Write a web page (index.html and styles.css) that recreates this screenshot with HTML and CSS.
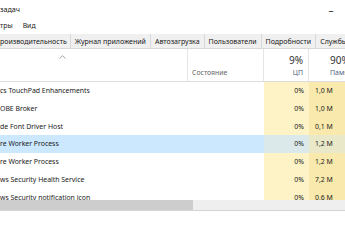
FILE: index.html
```html
<!DOCTYPE html>
<html lang="ru">

<head>
	<meta charset="UTF-8">
	<title>Диспетчер задач</title>
	<link rel="stylesheet" href="styles.css">
</head>

<body>
	<section class="window">
		<header class="titlebar">
			<span class="title">задач</span>
			<span class="win-btn">&#8211;</span>
		</header>
		<nav class="menubar">
			<span>тры</span>
			<span>Вид</span>
		</nav>
		<nav class="tabs">
			<span class="tab">роизводительность</span>
			<span class="tab">Журнал приложений</span>
			<span class="tab">Автозагрузка</span>
			<span class="tab">Пользователи</span>
			<span class="tab">Подробности</span>
			<span class="tab">Службы</span>
		</nav>

		<main class="table">
			<div class="head">
				<div class="col name">
					<svg class="sort" width="7" height="4" viewBox="0 0 7 4"><path d="M0.5 3.5 L3.5 0.8 L6.5 3.5" fill="none" stroke="#8a8a8a" stroke-width="0.8"/></svg>
				</div>
				<div class="col status"><span class="sub">Состояние</span></div>
				<div class="col cpu"><span class="big">9%</span><span class="sub">ЦП</span></div>
				<div class="col mem"><span class="big">90%</span><span class="sub">Памя</span></div>
			</div>

			<div class="rows">
				<div class="row">
					<div class="col name">cs TouchPad Enhancements</div>
					<div class="col status"></div>
					<div class="col cpu">0%</div>
					<div class="col mem">1,0 M</div>
				</div>
				<div class="row">
					<div class="col name">OBE Broker</div>
					<div class="col status"></div>
					<div class="col cpu">0%</div>
					<div class="col mem">1,0 M</div>
				</div>
				<div class="row">
					<div class="col name">de Font Driver Host</div>
					<div class="col status"></div>
					<div class="col cpu">0%</div>
					<div class="col mem">0,1 M</div>
				</div>
				<div class="row selected">
					<div class="col name">re Worker Process</div>
					<div class="col status"></div>
					<div class="col cpu">0%</div>
					<div class="col mem">1,2 M</div>
				</div>
				<div class="row">
					<div class="col name">re Worker Process</div>
					<div class="col status"></div>
					<div class="col cpu">0%</div>
					<div class="col mem">1,2 M</div>
				</div>
				<div class="row">
					<div class="col name">ws Security Health Service</div>
					<div class="col status"></div>
					<div class="col cpu">0%</div>
					<div class="col mem">7,2 M</div>
				</div>
				<div class="row">
					<div class="col name">ws Security notification icon</div>
					<div class="col status"></div>
					<div class="col cpu">0%</div>
					<div class="col mem">0,6 M</div>
				</div>
			</div>

			<div class="hscroll">
				<div class="thumb"></div>
			</div>
		</main>
	</section>
</body>

</html>
```

FILE: styles.css
```css
body {
	margin: 0;
	padding: 0;
	background-color: white;
	overflow: hidden;
}

.window {
	width: 345px;
	height: 240px;
	overflow: hidden;
	font-family: "Noto Sans", "Liberation Sans", sans-serif;
	font-size: 6.9px;
	color: #1a1a1a;
}

/* title + menu */
.titlebar {
	height: 17px;
	display: flex;
	align-items: center;
	justify-content: space-between;
	font-size: 7.2px;
}

.win-btn {
	width: 20px;
	margin-right: 4px;
	padding-top: 3px;
	text-align: center;
	font-size: 10px;
	color: #333;
}

.menubar {
	height: 17px;
	display: flex;
	align-items: center;
	gap: 10px;
}

/* tabs */
.tabs {
	height: 14px;
	display: flex;
	background-color: #f0f0f0;
	border-bottom: 1px solid #d9d9d9;
	font-size: 7px;
}

.tab {
	display: flex;
	align-items: center;
	padding: 0 4px;
	border-right: 1px solid #d9d9d9;
	white-space: nowrap;
}

.tab:first-child {
	padding-left: 0;
	padding-right: 3px;
}

/* table */
.table {
	width: 400px;
}

.head,
.row {
	display: flex;
}

.col {
	box-sizing: border-box;
	white-space: nowrap;
	overflow: hidden;
}

.name {
	width: 188px;
}

.status {
	width: 76px;
	padding-left: 4px;
}

.cpu {
	width: 45px;
	padding-right: 5px;
	text-align: right;
}

.mem {
	width: 60px;
	padding-left: 5px;
}

.head {
	height: 32px;
	border-bottom: 1px solid #dcdcdc;
}

.head .col {
	display: flex;
	flex-direction: column;
	justify-content: flex-end;
	padding-bottom: 2px;
	border-right: 1px solid #e5e5e5;
}

.head .name {
	justify-content: flex-start;
	padding-top: 6px;
	padding-left: 59px;
}

.head .cpu {
	align-items: flex-end;
}

.head .mem {
	padding-left: 21px;
}

.big {
	font-size: 10px;
	color: #333;
	line-height: 14px;
}

.sub {
	color: #4d6082;
	line-height: 12px;
}

.head .status .sub {
	color: #666;
}

.rows {
	height: 118px;
	overflow: hidden;
}

.row {
	height: 17.8px;
	line-height: 17.8px;
}

.row .cpu {
	background-color: #fdf3c6;
}

.row .mem {
	background-color: #f9e9ad;
	padding-left: 6px;
}

.row.selected .name,
.row.selected .status {
	background-color: #cce8ff;
}

.row.selected .cpu {
	background-color: #dbe9ea;
}

.row.selected .mem {
	background-color: #e9e8c8;
}

/* horizontal scrollbar */
.hscroll {
	width: 345px;
	height: 10px;
	background-color: #efefef;
	border-bottom: 1px solid #d4d4d4;
}

.thumb {
	width: 193px;
	height: 100%;
	background-color: #cdcdcd;
}
```
